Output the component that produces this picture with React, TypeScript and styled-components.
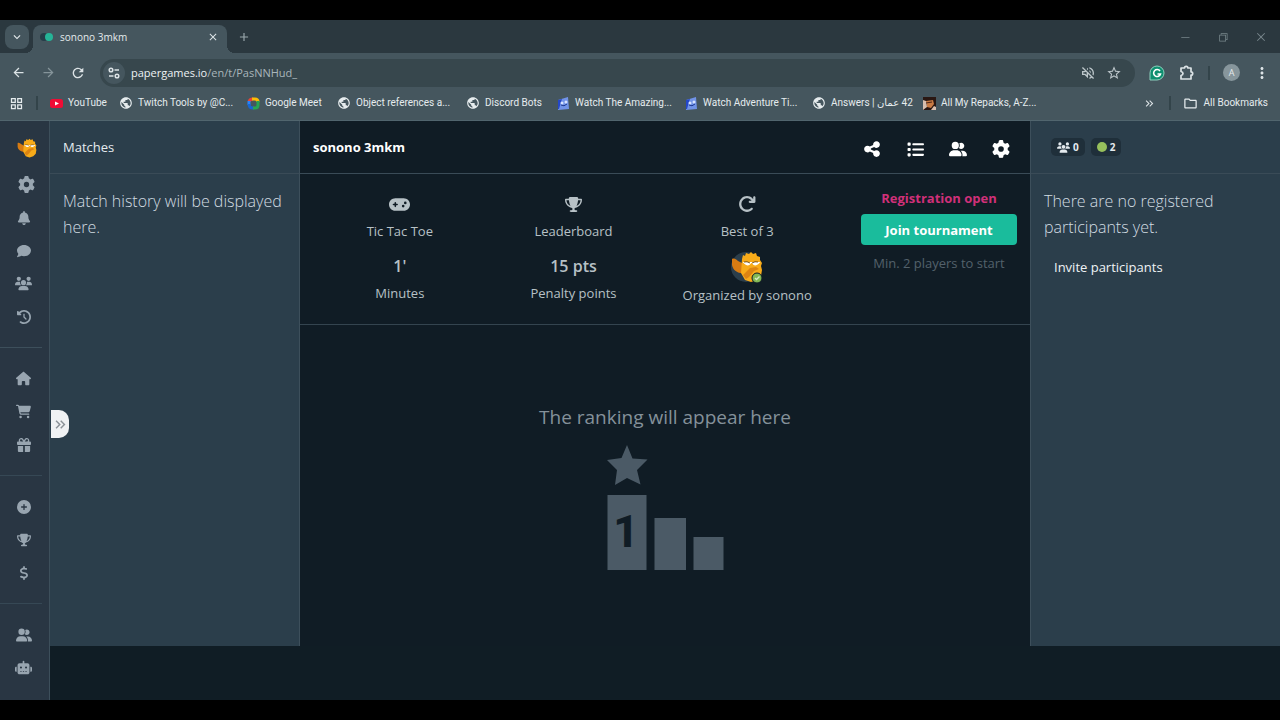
import React from 'react';
import styled, { createGlobalStyle } from 'styled-components';
import {
  FaArrowRotateRight, FaBell, FaCartShopping, FaCirclePlus, FaClockRotateLeft, FaComment, FaDollarSign,
  FaGamepad, FaGear, FaGift, FaHouse, FaList, FaRobot, FaShareNodes, FaTrophy, FaUserGroup, FaUsers,
} from 'react-icons/fa6';
import {
  MdAdd, MdArrowBack, MdArrowForward, MdClose, MdKeyboardArrowDown, MdKeyboardDoubleArrowRight, MdMoreVert,
  MdOutlineFolder, MdOutlineGridView, MdOutlineVolumeOff, MdPublic, MdRefresh, MdStarBorder,
} from 'react-icons/md';
import { VscChromeMinimize, VscChromeRestore, VscChromeClose } from 'react-icons/vsc';

const GlobalStyle = createGlobalStyle`
  *, *::before, *::after { box-sizing: border-box; }
  body { margin: 0; background: #000; }
  button { font: inherit; color: inherit; background: none; border: 0; padding: 0; }
  a { color: inherit; text-decoration: none; }
  h1, h2, p { margin: 0; font-weight: inherit; }
  svg { display: block; flex: none; }
`;

const Page = styled.div`
  display: flex;
  flex-direction: column;
  min-height: 100vh;
  padding: 20px 0;
  background: #000;
  font-family: 'Open Sans', 'Noto Sans', 'DejaVu Sans', sans-serif;
`;

/* ---------- browser ---------- */

const TabStrip = styled.div`
  display: flex;
  align-items: flex-end;
  height: 33px;
  padding-left: 5px;
  background: #2b383f;
  color: #e4eaec;
`;

const TabSearch = styled.button`
  display: grid;
  place-items: center;
  width: 24px;
  height: 24px;
  margin: 0 4px 4px 0;
  border-radius: 8px;
  background: #45565e;
`;

const Tab = styled.div`
  position: relative;
  display: flex;
  align-items: center;
  width: 194px;
  height: 28px;
  padding: 0 7px 4px;
  gap: 6px;
  border-radius: 8px 8px 0 0;
  background: #45565e;

  &::before, &::after {
    content: '';
    position: absolute;
    bottom: 0;
    width: 8px;
    height: 8px;
  }
  &::before { right: 100%; background: radial-gradient(circle at 0 0, transparent 8px, #45565e 8px); }
  &::after { left: 100%; background: radial-gradient(circle at 100% 0, transparent 8px, #45565e 8px); }
`;

const TabTitle = styled.span`
  flex: 1;
  font-size: 10px;
`;

const IconButton = styled.button<{ $size?: number; $color?: string }>`
  display: grid;
  place-items: center;
  width: ${p => p.$size ?? 24}px;
  height: ${p => p.$size ?? 24}px;
  color: ${p => p.$color ?? '#dce3e6'};
`;

const NewTab = styled(IconButton)`
  margin: 0 0 4px 5px;
`;

const WindowControls = styled.div`
  display: flex;
  gap: 14px;
  height: 33px;
  margin-left: auto;
  padding-right: 7px;
  align-items: center;
`;

const Toolbar = styled.div`
  display: flex;
  align-items: center;
  height: 39px;
  padding: 0 8px 0 6px;
  gap: 6px;
  background: #45565e;
`;

const AddressBar = styled.div`
  display: flex;
  align-items: center;
  flex: 1;
  height: 28px;
  margin: 0 4px;
  padding: 0 8px 0 3px;
  border-radius: 14px;
  background: #37474d;
`;

const SiteInfo = styled(IconButton)`
  border-radius: 50%;
  background: #45565e;
`;

const AddressText = styled.div`
  position: relative;
  flex: 1;
  font-size: 11px;
  line-height: 20px;
  color: #a9b6bb;
  b { font-weight: 400; color: #edf2f4; }
`;

const AddressInput = styled.input`
  display: block;
  width: 100%;
  height: 20px;
  padding: 0 6px;
  border: 0;
  outline: 0;
  background: none;
  font: inherit;
  color: transparent;
`;

const AddressOverlay = styled.span`
  position: absolute;
  inset: 0 6px;
  pointer-events: none;
`;

const Divider = styled.span<{ $gap?: number }>`
  width: 2px;
  height: 14px;
  margin: 0 ${p => p.$gap ?? 0}px;
  background: #33444a;
`;

const Profile = styled.button`
  width: 17px;
  height: 17px;
  margin: 0 6px 0 4px;
  border-radius: 50%;
  background: #87969c;
  color: #e4eaec;
  font-size: 9px;
  line-height: 17px;
`;

const Bookmarks = styled.nav`
  display: flex;
  align-items: center;
  height: 28px;
  padding: 0 12px 6px 9px;
  background: #45565e;
  color: #e6ecee;
  font-family: Roboto, 'Open Sans', 'DejaVu Sans', sans-serif;
  font-size: 10px;
  line-height: 16px;
  white-space: nowrap;
`;

const Bookmark = styled.a<{ $width: number }>`
  display: flex;
  align-items: center;
  gap: 5px;
  width: ${p => p.$width}px;
`;

const BookmarkEnd = styled.div`
  display: flex;
  align-items: center;
  gap: 6px;
  margin-left: auto;
`;

/* ---------- site ---------- */

const Site = styled.div`
  display: flex;
  flex: 1;
  border-top: 1px solid #51656e;
  background: #101d25;
  color: #b7c1c6;
`;

const Rail = styled.nav`
  width: 50px;
  border-right: 1px solid #3d4f5b;
  background: #293643;
  color: #98a5b0;
`;

const RailTop = styled.div`
  display: flex;
  flex-direction: column;
  align-items: center;
  gap: 10px;
  padding: 17px 0 0 4px;
`;

const RailGroup = styled.div<{ $first?: boolean }>`
  display: flex;
  flex-direction: column;
  width: 42px;
  padding: ${p => (p.$first ? 0 : 14)}px 0 14px 5px;
  border-bottom: 1px solid ${p => (p.$first ? '#3d4f5b' : '#364855')};
  &:last-child { border-bottom: 0; padding-bottom: 0; }
`;

const RailLink = styled.a`
  display: grid;
  place-items: center;
  height: 33px;
`;

const Columns = styled.div`
  position: relative;
  display: flex;
  flex: 1;
  margin-bottom: 54px;
`;

const SidePanel = styled.aside<{ $side: 'left' | 'right' }>`
  width: 250px;
  border-${p => (p.$side === 'left' ? 'right' : 'left')}: 1px solid #3d4f5b;
  background: #2b3e4b;
`;

const Center = styled.main`
  display: flex;
  flex-direction: column;
  flex: 1;
  background: #101c25;
`;

const Header = styled.header`
  display: flex;
  align-items: center;
  height: 53px;
  padding: 0 13px;
  border-bottom: 1px solid #3a4b57;
  color: #e5ebef;
  font-size: 13px;
  font-weight: 500;
`;

const Title = styled.h1`
  flex: 1;
  font-size: 13px;
  font-weight: 700;
  color: #fff;
`;

const HeaderActions = styled.div`
  display: flex;
  gap: 19px;
  margin: 4px 4px 0 0;
`;

const PanelText = styled.p`
  padding: 14px 13px 0;
  font-size: 16px;
  font-weight: 300;
  line-height: 26px;
  color: #d2dce2;
`;

const Invite = styled.button`
  margin: 17px 23px;
  font-size: 13px;
  font-weight: 500;
  line-height: 20px;
  color: #eff3f5;
`;

const Badges = styled.div`
  display: flex;
  gap: 6px;
  padding-left: 7px;
`;

const Badge = styled.span`
  display: flex;
  align-items: center;
  gap: 3px;
  height: 18px;
  padding: 0 6px;
  border-radius: 5px;
  background: #1f2f3a;
  color: #e5ebef;
  font-size: 10px;
  font-weight: 700;
`;

const Online = styled.i`
  width: 10px;
  height: 10px;
  border-radius: 50%;
  background: #97c05c;
`;

const Handle = styled.button`
  position: absolute;
  top: 289px;
  left: 1px;
  display: grid;
  place-items: center;
  width: 18px;
  height: 28px;
  border-radius: 0 10px 10px 0;
  background: #f0f2f4;
  color: #8b9298;
`;

const Info = styled.section`
  display: flex;
  gap: 27px;
  height: 151px;
  padding: 15px 13px 0;
  border-bottom: 1px solid #34444f;
`;

const Stats = styled.div`
  flex: 1;
  display: grid;
  grid-template-columns: repeat(3, 1fr);
  grid-auto-rows: 62px;
`;

const Stat = styled.div`
  display: flex;
  flex-direction: column;
  align-items: center;
  font-size: 13px;
  line-height: 20px;
  white-space: nowrap;
`;

const StatValue = styled.div`
  display: grid;
  place-items: center;
  height: 30px;
  margin-bottom: 2px;
  font-size: 16px;
  font-weight: 600;
`;

const Avatar = styled(StatValue)`
  margin-bottom: 4px;
`;

const Join = styled.div`
  width: 156px;
  font-size: 13px;
  line-height: 18px;
  text-align: center;
  color: #53616b;
`;

const Status = styled.p`
  margin-bottom: 7px;
  font-weight: 700;
  color: #d03079;
`;

const JoinButton = styled.button`
  width: 100%;
  height: 31px;
  margin-bottom: 9px;
  border-radius: 4px;
  background: #1abc9c;
  color: #fff;
  font-weight: 700;
`;

const Ranking = styled.section`
  display: flex;
  flex-direction: column;
  align-items: center;
  padding-top: 78px;
  font-size: 19px;
  line-height: 28px;
  color: #84919a;
  svg { margin-top: 14px; }
`;

const Bird = ({ size, disc }: { size: number; disc?: boolean }) => (
  <svg width={size} height={size} viewBox="0 0 32 32" aria-hidden="true">
    {disc && <circle cx="15" cy="16" r="15" fill="#2b3e4b" />}
    <path d="M1 8c2-1 4 0 6 2l6 3 1 9c-6 1-12-2-13-8z" fill="#d77b12" />
    <path d="M11 8l1-4 2 1 1-3 3 1 2-2 2 2 3-1 1 3 3 1v3l2 3-1 3 1 4-1 6-4 4-6 2-6-2-4-7z" fill="#f8ab19" />
    <path d="M12 24l7-7 6-1 3 2-5 2-5 6-3 2z" fill="#dd8412" />
    <path d="M14 12q3 3 5 0zm8 0q2 3 5 0z" fill="#fff" stroke="#fff" strokeWidth="2" />
    <path d="M13 11q3-1 6 1m2 0q3-2 6-1" stroke="#7a561b" strokeWidth="1" fill="none" />
    {disc && (
      <>
        <circle cx="26" cy="27" r="5" fill="#83b855" stroke="#101c25" />
        <path d="M24 27l1.500 1.500 3-3" fill="none" stroke="#d7ecc3" strokeWidth="1.300" />
      </>
    )}
  </svg>
);

const Tune = () => (
  <svg width="14" height="14" viewBox="0 0 14 14" fill="none" stroke="currentColor" strokeWidth="1.500">
    <circle cx="4" cy="4" r="1.800" /><path d="M7.500 4H12M2 10h4.500" /><circle cx="10" cy="10" r="1.800" />
  </svg>
);

const Puzzle = () => (
  <svg width="16" height="16" viewBox="0 0 16 16" fill="none" stroke="currentColor" strokeWidth="1.700">
    <path d="M2 3h3.500a1.700 1.700 0 0 1 3.400 0H12v3.800a1.700 1.700 0 0 1 0 3.400V14H2v-3.500q2-.5 2-2t-2-2z" strokeLinejoin="round" />
  </svg>
);

const Knights = () => (
  <svg width="14" height="14" viewBox="0 0 14 14">
    <circle cx="4" cy="7" r="4" fill="#263d48" /><circle cx="9" cy="7" r="4" fill="#25b497" />
  </svg>
);

const YouTube = () => (
  <svg width="13" height="13" viewBox="0 0 13 13">
    <rect y="2" width="13" height="9" rx="2.500" fill="#f00c35" /><path d="M5 4.500l4 2-4 2z" fill="#fff" />
  </svg>
);

const Meet = () => (
  <svg width="13" height="13" viewBox="0 0 13 13" fill="none" strokeWidth="3">
    <path d="M2 4.500Q3 2 6 2" stroke="#ea4335" /><path d="M5 2h3q3 0 3 3" stroke="#fbbc05" />
    <path d="M2 4v4" stroke="#2684fc" /><path d="M2 7q0 4 4 4h1" stroke="#1967d2" />
    <path d="M6 11h2q3 0 3-3V4" stroke="#26a653" />
  </svg>
);

const Cartoon = () => (
  <svg width="13" height="13" viewBox="0 0 13 13">
    <path d="M1 3l10-3 1 12-11 1z" fill="#7193e8" /><path d="M1 3l4-1-1 3-2 7H1z" fill="#2447c9" />
    <circle cx="5" cy="6" r="1.500" fill="#d7e3ff" /><circle cx="9" cy="5" r="1.500" fill="#d7e3ff" />
    <path d="M4 8q3 2 6-1" stroke="#1c378f" fill="none" />
  </svg>
);

const Portrait = () => (
  <svg width="13" height="13" viewBox="0 0 13 13">
    <path d="M0 0h13v13H0z" fill="#2a1712" /><path d="M3 4l7-1 1 4-3 4-4-1z" fill="#c87a43" />
    <path d="M0 3l3 1 1 6-4 3zM11 9l2 1v3H8z" fill="#d9bfae" /><path d="M3 6l6-1" stroke="#4e2516" />
  </svg>
);

const Grammar = () => (
  <svg width="16" height="16" viewBox="0 0 16 16" fill="none">
    <path d="M8 1a7 7 0 1 1 0 14H1V8a7 7 0 0 1 7-7z" fill="#0e8f70" stroke="#8cd0bd" />
    <path d="M11 6a3.500 3.500 0 1 0 .500 3H8.500" stroke="#fff" strokeWidth="1.600" />
  </svg>
);

const Podium = () => (
  <svg width="118" height="126" viewBox="0 0 118 126" fill="#4b5a66" role="img" aria-label="Podium">
    <path d="M21 0l5.500 13.500 15 1-10.500 10.500 3.500 14.500-13.500-6.500-12 7 2-15L1 15l14.500-2z" />
    <path d="M1.500 50h39v75h-39zM48.500 73h31.500v52H48.500zM87.500 92h30v33h-30z" />
    <text x="20" y="102" textAnchor="middle" fontFamily="Roboto" fontSize="44" fontWeight="800" fill="#101c25">1</text>
  </svg>
);

const globe = <MdPublic size={14} />;
const bookmarks: { width: number; icon: React.ReactNode; label: React.ReactNode }[] = [
  { width: 69, icon: <YouTube />, label: 'YouTube' },
  { width: 128, icon: globe, label: 'Twitch Tools by @C...' },
  { width: 90, icon: <Meet />, label: 'Google Meet' },
  { width: 129, icon: globe, label: 'Object references a...' },
  { width: 91, icon: globe, label: 'Discord Bots' },
  { width: 128, icon: <Cartoon />, label: 'Watch The Amazing...' },
  { width: 127, icon: <Cartoon />, label: 'Watch Adventure Ti...' },
  { width: 111, icon: globe, label: <span dir="rtl">42 عمان | Answers</span> },
  { width: 128, icon: <Portrait />, label: 'All My Repacks, A-Z...' },
];

const railGroups = [
  [['Notifications', FaBell, 14], ['Chat', FaComment, 14], ['Groups', FaUsers, 17], ['History', FaClockRotateLeft, 14]],
  [['Home', FaHouse, 15], ['Shop', FaCartShopping, 15], ['Gifts', FaGift, 14]],
  [['Create', FaCirclePlus, 14], ['Tournaments', FaTrophy, 14], ['Earn', FaDollarSign, 14]],
  [['Friends', FaUserGroup, 16], ['Robots', FaRobot, 17]],
] as const;

export default function App() {
  return (
    <Page>
      <GlobalStyle />
      <TabStrip>
        <TabSearch aria-label="Search tabs"><MdKeyboardArrowDown size={14} /></TabSearch>
        <Tab>
          <Knights />
          <TabTitle>sonono 3mkm</TabTitle>
          <IconButton $size={14} aria-label="Close tab"><MdClose size={12} /></IconButton>
        </Tab>
        <NewTab $color="#9aa7ac" aria-label="New tab"><MdAdd size={14} /></NewTab>
        <WindowControls>
          <IconButton $color="#78868c" aria-label="Minimize"><VscChromeMinimize size={12} /></IconButton>
          <IconButton $color="#78868c" aria-label="Restore"><VscChromeRestore size={12} /></IconButton>
          <IconButton $color="#78868c" aria-label="Close"><VscChromeClose size={12} /></IconButton>
        </WindowControls>
      </TabStrip>
      <Toolbar>
        <IconButton aria-label="Back"><MdArrowBack size={15} /></IconButton>
        <IconButton $color="#85949a" aria-label="Forward"><MdArrowForward size={15} /></IconButton>
        <IconButton aria-label="Reload"><MdRefresh size={16} /></IconButton>
        <AddressBar>
          <SiteInfo $size={22} aria-label="Site information"><Tune /></SiteInfo>
          <AddressText>
            <AddressInput aria-label="Address" />
            <AddressOverlay><b>papergames.io</b>/en/t/PasNNHud_</AddressOverlay>
          </AddressText>
          <IconButton $size={26} $color="#bcc6ca" aria-label="Sound off"><MdOutlineVolumeOff size={16} /></IconButton>
          <IconButton $size={26} $color="#bcc6ca" aria-label="Bookmark"><MdStarBorder size={16} /></IconButton>
        </AddressBar>
        <IconButton aria-label="Writing helper"><Grammar /></IconButton>
        <IconButton aria-label="Extensions"><Puzzle /></IconButton>
        <Divider $gap={3} />
        <Profile aria-label="Profile">A</Profile>
        <IconButton $size={20} aria-label="Menu"><MdMoreVert size={18} /></IconButton>
      </Toolbar>
      <Bookmarks>
        <MdOutlineGridView size={15} />
        <Divider $gap={12} />
        {bookmarks.map((b, i) => (
          <Bookmark key={i} href="#" $width={b.width}>{b.icon}{b.label}</Bookmark>
        ))}
        <BookmarkEnd>
          <IconButton $size={14} aria-label="More bookmarks"><MdKeyboardDoubleArrowRight size={13} /></IconButton>
          <Divider $gap={6} />
          <MdOutlineFolder size={15} />
          <a href="#">All Bookmarks</a>
        </BookmarkEnd>
      </Bookmarks>

      <Site>
        <Rail>
          <RailTop>
            <a href="#" aria-label="Profile"><Bird size={20} /></a>
            <RailLink href="#" aria-label="Settings"><FaGear size={17} /></RailLink>
          </RailTop>
          {railGroups.map((group, i) => (
            <RailGroup key={i} $first={i === 0}>
              {group.map(([label, Icon, size]) => (
                <RailLink key={label} href="#" aria-label={label}><Icon size={size} /></RailLink>
              ))}
            </RailGroup>
          ))}
        </Rail>
        <Columns>
          <SidePanel $side="left">
            <Header as="h2">Matches</Header>
            <PanelText>Match history will be displayed here.</PanelText>
          </SidePanel>
          <Center>
            <Header>
              <Title>sonono 3mkm</Title>
              <HeaderActions>
                <IconButton $color="#fff" aria-label="Share"><FaShareNodes size={18} /></IconButton>
                <IconButton $color="#fff" aria-label="List"><FaList size={17} /></IconButton>
                <IconButton $color="#fff" aria-label="Players"><FaUserGroup size={18} /></IconButton>
                <IconButton $color="#fff" aria-label="Settings"><FaGear size={18} /></IconButton>
              </HeaderActions>
            </Header>
            <Info>
              <Stats>
                <Stat><StatValue><FaGamepad size={21} /></StatValue>Tic Tac Toe</Stat>
                <Stat><StatValue><FaTrophy size={17} /></StatValue>Leaderboard</Stat>
                <Stat><StatValue><FaArrowRotateRight size={18} /></StatValue>Best of 3</Stat>
                <Stat><StatValue>1'</StatValue>Minutes</Stat>
                <Stat><StatValue>15 pts</StatValue>Penalty points</Stat>
                <Stat><Avatar><Bird size={32} disc /></Avatar>Organized by sonono</Stat>
              </Stats>
              <Join>
                <Status>Registration open</Status>
                <JoinButton>Join tournament</JoinButton>
                <p>Min. 2 players to start</p>
              </Join>
            </Info>
            <Ranking>
              <p>The ranking will appear here</p>
              <Podium />
            </Ranking>
          </Center>
          <SidePanel $side="right">
            <Header as="div">
              <Badges>
                <Badge><FaUsers size={13} />0</Badge>
                <Badge><Online />2</Badge>
              </Badges>
            </Header>
            <PanelText>There are no registered participants yet.</PanelText>
            <Invite>Invite participants</Invite>
          </SidePanel>
          <Handle aria-label="Expand"><MdKeyboardDoubleArrowRight size={17} /></Handle>
        </Columns>
      </Site>
    </Page>
  );
}
